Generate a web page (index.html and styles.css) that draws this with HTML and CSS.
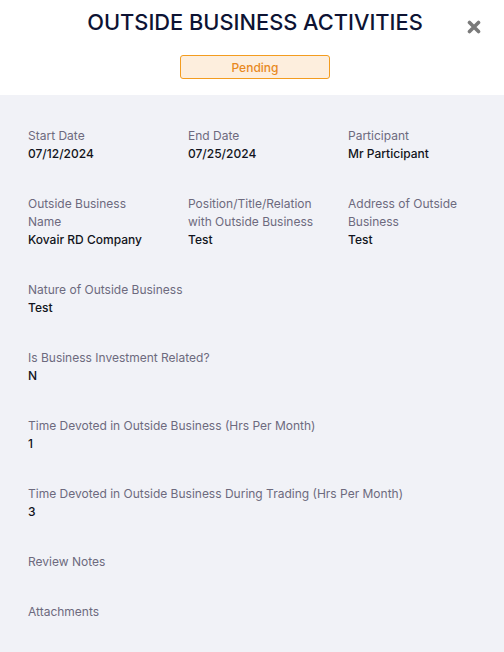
FILE: index.html
```html
<!DOCTYPE html>
<html lang="en">
<head>
<meta charset="utf-8">
<title>Outside Business Activities</title>
<link rel="stylesheet" href="styles.css">
</head>
<body>
<div class="modal">
  <header class="modal-header">
    <h1 class="title">OUTSIDE BUSINESS ACTIVITIES</h1>
    <button class="close" aria-label="Close">
      <svg viewBox="0 0 14 14" width="14" height="14"><path d="M2.5 2.5 L11.5 11.5 M11.5 2.5 L2.5 11.5" stroke="#7a7a7a" stroke-width="3.6" stroke-linecap="round"/></svg>
    </button>
    <div class="badge">Pending</div>
  </header>
  <section class="details">
    <div class="grid">
      <div class="field"><div class="label">Start Date</div><div class="value">07/12/2024</div></div>
      <div class="field"><div class="label">End Date</div><div class="value">07/25/2024</div></div>
      <div class="field"><div class="label">Participant</div><div class="value">Mr Participant</div></div>
      <div class="field"><div class="label">Outside Business Name</div><div class="value">Kovair RD Company</div></div>
      <div class="field"><div class="label">Position/Title/Relation with Outside Business</div><div class="value">Test</div></div>
      <div class="field"><div class="label">Address of Outside Business</div><div class="value">Test</div></div>
    </div>
    <div class="field"><div class="label">Nature of Outside Business</div><div class="value">Test</div></div>
    <div class="field"><div class="label">Is Business Investment Related?</div><div class="value">N</div></div>
    <div class="field"><div class="label">Time Devoted in Outside Business (Hrs Per Month)</div><div class="value">1</div></div>
    <div class="field"><div class="label">Time Devoted in Outside Business During Trading (Hrs Per Month)</div><div class="value">3</div></div>
    <div class="field"><div class="label">Review Notes</div></div>
    <div class="field"><div class="label">Attachments</div></div>
  </section>
</div>
</body>
</html>
```
FILE: styles.css
```css
* { box-sizing: border-box; }
html, body { margin: 0; padding: 0; }
body {
  font-family: Inter, "Noto Sans", Arial, sans-serif;
  background: #f1f2f7;
  width: 504px;
  height: 652px;
  overflow: hidden;
}
.modal { display: flex; flex-direction: column; min-height: 652px; }
.modal-header {
  position: relative;
  background: #ffffff;
  display: flex;
  flex-direction: column;
  align-items: center;
  padding: 8px 0 16px 6px;
}
.title {
  margin: 0;
  font-size: 21.8px;
  line-height: 28px;
  font-weight: 500;
  color: #0d1333;
}
.close {
  position: absolute;
  top: 19px;
  right: 22px;
  width: 16px;
  height: 16px;
  padding: 0;
  border: 0;
  background: none;
  display: flex;
  align-items: center;
  justify-content: center;
}
.badge {
  margin-top: 19px;
  width: 150px;
  height: 24px;
  border: 1px solid #f39c1f;
  border-radius: 3px;
  background: #fdeedd;
  color: #e8891e;
  font-size: 12px;
  font-weight: 500;
  display: flex;
  align-items: center;
  justify-content: center;
}
.details {
  flex: 1;
  background: #f1f2f7;
  padding: 32px 28px 20px;
  display: flex;
  flex-direction: column;
  gap: 32px;
}
.grid {
  display: grid;
  grid-template-columns: 128px 128px 128px;
  column-gap: 32px;
  row-gap: 32px;
}
.label {
  font-size: 12px;
  line-height: 18px;
  color: #6d6a7e;
}
.value {
  font-size: 12px;
  line-height: 18px;
  font-weight: 500;
  color: #121420;
}
```
